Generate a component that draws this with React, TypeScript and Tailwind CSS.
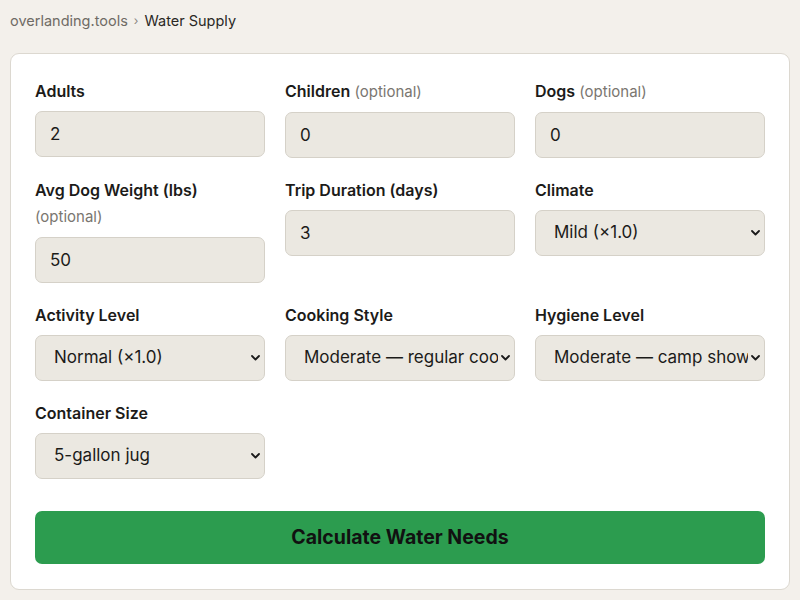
import React from "react";

const font = { fontFamily: "Inter, 'Noto Sans', sans-serif" };

function Chevron() {
  return (
    <svg className="pointer-events-none absolute right-[5px] top-1/2 -translate-y-1/2" width="9" height="6" viewBox="0 0 9 6">
      <path d="M1 1 L4.5 4.5 L8 1" fill="none" stroke="#1a1a1a" strokeWidth="1.8" strokeLinecap="round" strokeLinejoin="round" />
    </svg>
  );
}

function Label({ text, optional, wrap }: { text: string; optional?: boolean; wrap?: boolean }) {
  return (
    <div className="mb-[10px] text-[16px] font-semibold leading-[20px] text-[#1c1b19]">
      {text}
      {optional && (wrap ? (
        <div className="mt-[7px] text-[15px] font-normal text-[#7a7670]">(optional)</div>
      ) : (
        <span className="text-[15px] font-normal text-[#7a7670]"> (optional)</span>
      ))}
    </div>
  );
}

function Input({ value }: { value: string }) {
  return (
    <input
      defaultValue={value}
      className="h-[46px] w-full rounded-[7px] border border-[#d5d1c8] bg-[#ebe8e1] px-[14px] text-[17px] text-[#1c1b19] outline-none"
      style={font}
    />
  );
}

function Select({ value }: { value: string }) {
  return (
    <div className="relative">
      <select
        className="h-[46px] w-full appearance-none overflow-hidden rounded-[7px] border border-[#d5d1c8] bg-[#ebe8e1] pl-[18px] pr-[16px] text-[17px] text-[#1c1b19] outline-none"
        style={font}
        defaultValue={value}
      >
        <option>{value}</option>
      </select>
      <Chevron />
    </div>
  );
}

export default function App() {
  return (
    <div className="min-h-[600px] w-[800px] bg-[#f3f0eb] px-[10px] pt-[10px] pb-[12px]" style={font}>
      <div className="flex items-center text-[14.5px] leading-[22px]">
        <span className="text-[#6f6b65]">overlanding.tools</span>
        <span className="mx-[6px] text-[12px] text-[#8a867f]">›</span>
        <span className="text-[#2a2825]">Water Supply</span>
      </div>
      <div className="mt-[21px] rounded-[9px] border border-[#dcd8d0] bg-white px-[24px] pt-[27px] pb-[25px]">
        <div className="grid grid-cols-3 gap-x-[20px] gap-y-[22px]">
          <div>
            <Label text="Adults" />
            <Input value="2" />
          </div>
          <div>
            <Label text="Children" optional />
            <Input value="0" />
          </div>
          <div>
            <Label text="Dogs" optional />
            <Input value="0" />
          </div>
          <div>
            <Label text="Avg Dog Weight (lbs)" optional wrap />
            <Input value="50" />
          </div>
          <div>
            <Label text="Trip Duration (days)" />
            <Input value="3" />
          </div>
          <div>
            <Label text="Climate" />
            <Select value="Mild (×1.0)" />
          </div>
          <div>
            <Label text="Activity Level" />
            <Select value="Normal (×1.0)" />
          </div>
          <div>
            <Label text="Cooking Style" />
            <Select value="Moderate — regular cooking" />
          </div>
          <div>
            <Label text="Hygiene Level" />
            <Select value="Moderate — camp shower" />
          </div>
          <div>
            <Label text="Container Size" />
            <Select value="5-gallon jug" />
          </div>
        </div>
        <button className="mt-[32px] flex h-[53px] w-full items-center justify-center rounded-[7px] bg-[#2c9c4f] text-[19.5px] font-bold text-[#111] " style={font}>
          Calculate Water Needs
        </button>
      </div>
    </div>
  );
}
